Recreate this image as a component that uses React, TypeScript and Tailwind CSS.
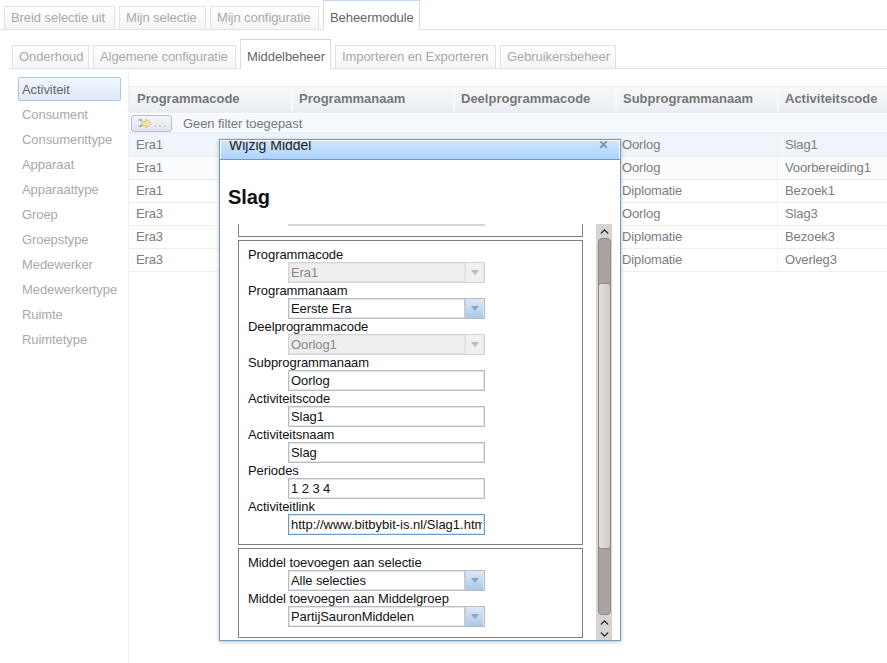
import { ChevronDown, ChevronUp, X } from 'lucide-react'

const topTabs = [
  { label: 'Breid selectie uit', w: 'w-[111px]' },
  { label: 'Mijn selectie', w: 'w-[87px]' },
  { label: 'Mijn configuratie', w: 'w-[109px]' },
]
const subTabsLeft = [
  { label: 'Onderhoud', w: 'w-[77px]' },
  { label: 'Algemene configuratie', w: 'w-[143px]' },
]
const subTabsRight = [
  { label: 'Importeren en Exporteren', w: 'w-[161px]' },
  { label: 'Gebruikersbeheer', w: 'w-[116px]' },
]
const sideItems = ['Consument', 'Consumenttype', 'Apparaat', 'Apparaattype', 'Groep', 'Groepstype', 'Medewerker', 'Medewerkertype', 'Ruimte', 'Ruimtetype']
const columns = ['Programmacode', 'Programmanaam', 'Deelprogrammacode', 'Subprogrammanaam', 'Activiteitscode']
const rows = [
  ['Era1', 'Oorlog', 'Slag1'],
  ['Era1', 'Oorlog', 'Voorbereiding1'],
  ['Era1', 'Diplomatie', 'Bezoek1'],
  ['Era3', 'Oorlog', 'Slag3'],
  ['Era3', 'Diplomatie', 'Bezoek3'],
  ['Era3', 'Diplomatie', 'Overleg3'],
]

function Tab({ label, w }: { label: string; w: string }) {
  return (
    <div className={`${w} h-[23px] border border-b-0 border-[#dfe1e4] bg-gradient-to-b from-white to-[#f4f5f6] text-[#a9a9a9] flex items-center pl-[6px] whitespace-nowrap`}>
      {label}
    </div>
  )
}

function ActiveTab({ label, w, h }: { label: string; w: string; h: string }) {
  return (
    <div className={`${w} ${h} relative -mb-px border border-b-0 border-[#d8dde4] border-t-[#c5d9ee] bg-white text-[#666] flex items-center pl-[6px] pt-[5px] whitespace-nowrap`}>
      {label}
    </div>
  )
}

function Arrow({ on }: { on: boolean }) {
  return (
    <div className={`w-[19px] h-[19px] border-l-2 flex items-center justify-center ${on ? 'border-[#c4cad6] bg-gradient-to-b from-[#dfe9f3] to-[#a9c8e6]' : 'border-[#e2e2e2] bg-[#f0f0f0]'}`}>
      <div className={`w-0 h-0 border-x-4 border-x-transparent border-t-[5px] ${on ? 'border-t-[#8fa3c4]' : 'border-t-[#bcbcbc]'}`} />
    </div>
  )
}

function Field({ label, value, kind }: { label: string; value: string; kind: 'input' | 'select' | 'disabled' | 'focus' }) {
  const border = kind === 'disabled'
    ? 'border-[#d2d2d2] shadow-[inset_0_0_0_1px_#e6e6e6]'
    : kind === 'focus'
      ? 'border-[#6c9cc6] shadow-[inset_0_0_0_1px_#dce8f2]'
      : 'border-[#b4bccb] shadow-[inset_0_0_0_1px_#e3e6ec]'
  const hasArrow = kind === 'select' || kind === 'disabled'
  return (
    <div className="h-[36px]">
      <div className="h-[15px] leading-[15px] pl-[9px] text-[#111] whitespace-nowrap">{label}</div>
      <div className={`ml-[49px] w-[197px] h-[21px] border ${border} flex items-center overflow-hidden p-px ${kind === 'disabled' ? 'bg-[#eeeeee] text-[#888]' : 'bg-white text-[#111]'}`}>
        <span className={`flex-1 pl-px whitespace-nowrap overflow-hidden ${kind === 'focus' ? 'mr-[1px] tracking-normal' : ''}`}>{value}</span>
        {hasArrow && <Arrow on={kind === 'select'} />}
      </div>
    </div>
  )
}

function ScrollBar() {
  return (
    <div className="w-[16px] h-full bg-[#d6d3d1] flex flex-col items-center shrink-0">
      <div className="h-[14px] flex items-center justify-center">
        <ChevronUp size={13} strokeWidth={2.5} className="text-[#222]" />
      </div>
      <div className="w-[13px] flex-1 bg-[#aaa3a1] border border-[#8e8886] rounded-[4px] flex flex-col">
        <div className="h-[44px]" />
        <div className="h-[266px] -mx-px bg-gradient-to-r from-[#e4e1df] to-[#cfccc9] border border-[#8e8886] rounded-[3px]" />
      </div>
      <div className="h-[12px] mt-px flex items-center justify-center">
        <ChevronUp size={13} strokeWidth={2.5} className="text-[#222]" />
      </div>
      <div className="h-[12px] flex items-center justify-center">
        <ChevronDown size={13} strokeWidth={2.5} className="text-[#222]" />
      </div>
    </div>
  )
}

function Modal() {
  return (
    <div className="absolute left-[219px] top-[139px] w-[402px] h-[502px] bg-white border border-[#6c9cc6] shadow-[0_1px_4px_rgba(0,0,0,0.25)] flex flex-col text-[13px] overflow-hidden">
      <div className="h-[19px] shrink-0 border border-white border-b-0 bg-gradient-to-b from-[#cfe5fb] to-[#abd3fb] relative overflow-hidden">
        <span className="absolute left-[8px] -top-[3px] text-[14px] leading-[15px] tracking-normal text-[#222]">Wijzig Middel</span>
        <X size={11} strokeWidth={4} className="absolute right-[10px] -top-[2px] text-[#7e98b4]" />
      </div>
      <div className="h-px bg-[#6c9cc6] shrink-0" />
      <div className="h-[64px] shrink-0 pl-[8px] pt-[26px] text-[20px] leading-[23px] font-bold text-[#111]">Slag</div>
      <div className="flex-1 min-h-0 flex pl-[18px] pr-[8px] overflow-hidden">
        <div className="w-[345px] shrink-0 flex flex-col">
          <div className="h-[13px] border-x border-b border-[#7f7f7f] shrink-0">
            <div className="ml-[49px] w-[197px] h-[2px] bg-[#d5d5d5]" />
          </div>
          <div className="mt-[3px] border border-[#7f7f7f] h-[305px] pt-[6px] shrink-0">
            <Field label="Programmacode" value="Era1" kind="disabled" />
            <Field label="Programmanaam" value="Eerste Era" kind="select" />
            <Field label="Deelprogrammacode" value="Oorlog1" kind="disabled" />
            <Field label="Subprogrammanaam" value="Oorlog" kind="input" />
            <Field label="Activiteitscode" value="Slag1" kind="input" />
            <Field label="Activiteitsnaam" value="Slag" kind="input" />
            <Field label="Periodes" value="1 2 3 4" kind="input" />
            <Field label="Activiteitlink" value="http://www.bitbybit-is.nl/Slag1.html" kind="focus" />
          </div>
          <div className="mt-[3px] border border-[#7f7f7f] h-[90px] pt-[6px] shrink-0">
            <Field label="Middel toevoegen aan selectie" value="Alle selecties" kind="select" />
            <Field label="Middel toevoegen aan Middelgroep" value="PartijSauronMiddelen" kind="select" />
          </div>
        </div>
        <div className="ml-[13px]">
          <ScrollBar />
        </div>
      </div>
    </div>
  )
}

export default function App() {
  return (
    <div className="relative w-[887px] h-[663px] overflow-hidden bg-white font-['Liberation_Sans',Arial,sans-serif] text-[13px] tracking-[-0.07px]">
      <div className="h-[30px] border-b border-[#dfe1e4] ml-px pl-[3px] flex items-end gap-[4px]">
        {topTabs.map((t) => <Tab key={t.label} {...t} />)}
        <ActiveTab label="Beheermodule" w="w-[97px]" h="h-[30px]" />
      </div>

      <div className="mt-[9px] ml-[9px] h-[30px] border-b border-[#dfe1e4] pl-[3px] flex items-end gap-[4px]">
        {subTabsLeft.map((t) => <Tab key={t.label} {...t} />)}
        <ActiveTab label="Middelbeheer" w="w-[91px]" h="h-[30px]" />
        {subTabsRight.map((t) => <Tab key={t.label} {...t} />)}
      </div>

      <div className="flex h-[594px]">
        <div className="w-[129px] shrink-0 border-r border-[#eef0f2] pt-[8px] pl-[18px] pr-[7px]">
          <div className="h-[24px] mb-px border border-[#a9c6e3] rounded-[2px] bg-gradient-to-b from-[#f2f7fc] to-[#deebf8] text-[#666] flex items-center pl-[3px] pt-px">Activiteit</div>
          {sideItems.map((s) => (
            <div key={s} className="h-[25px] pl-[4px] flex items-center text-[#a9a9a9]">{s}</div>
          ))}
        </div>

        <div className="flex-1 pt-[17px] min-w-0">
          <div className="h-[27px] border-t border-l border-[#eceef0] bg-gradient-to-b from-[#f6f8fa] to-[#e9edf3] grid grid-cols-[162px_162px_162px_162px_1fr] items-center font-bold text-[#777] tracking-normal">
            {columns.map((c, i) => (
              <div key={c} className={`h-[23px] mb-[2px] flex items-center whitespace-nowrap ${i > 0 ? 'pl-[6px] border-l-2 border-[#f8f9fb] -ml-px' : 'pl-[7px]'}`}>{c}</div>
            ))}
          </div>
          <div className="h-[20px] mt-px border-b-2 border-[#e8f0f8] bg-[#f6fafd] flex items-center">
            <div className="w-[41px] h-[17px] ml-[2px] border border-[#b9bec5] rounded-[3px] bg-gradient-to-b from-[#f3f6fa] to-[#dde6f0] flex items-center pl-[5px] gap-[3px] text-[#aaa]">
              <svg width="14" height="11" viewBox="0 0 14 11">
                <path d="M1 2h3M1 8h3M3 1l2 1-2 1M3 7l2 1-2 1" fill="none" stroke="#8a8f96" strokeWidth="0.8" />
                <path d="M5 3.5h4V1l5 4.5-5 4.5V7.5H5z" fill="#f5e6a8" stroke="#e0b450" strokeWidth="0.8" />
              </svg>
              <span className="leading-none text-[12px] tracking-[1px]">...</span>
            </div>
            <span className="ml-[11px] pt-px text-[#777]">Geen filter toegepast</span>
          </div>
          {rows.map((r, i) => (
            <div key={i} className={`h-[23px] grid grid-cols-[486px_162px_1fr] items-center text-[#7c7c7c] border-b tracking-[-0.12px] ${i === 0 ? 'bg-[#eff5fb] border-[#e4ecf4]' : i === 1 ? 'bg-[#fafcfe] border-[#eee9dd]' : 'border-[#f1eee3]'}`}>
              <div className="pl-[7px]">{r[0]}</div>
              <div className="pl-[7px]">{r[1]}</div>
              <div className="pl-[7px] border-l border-[#f0f1f3] h-full flex items-center">{r[2]}</div>
            </div>
          ))}
        </div>
      </div>

      <Modal />
    </div>
  )
}
